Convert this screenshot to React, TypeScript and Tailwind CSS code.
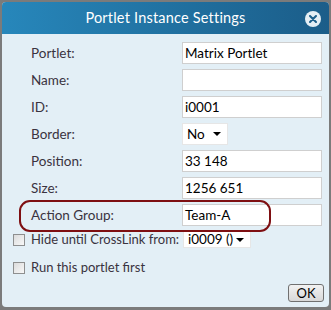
const font = { fontFamily: 'Lato, "Open Sans", sans-serif' };

function Row({ label, children }: { label: string; children: React.ReactNode }) {
  return (
    <div className="flex items-center h-[22px] mb-[5px]">
      <span className="w-[180px] shrink-0 pl-[29px] text-[13.5px] text-[#3a3340]">{label}</span>
      {children}
    </div>
  );
}

function Field({ value }: { value: string }) {
  return (
    <div className="w-[140px] h-[22px] bg-white border border-[#cfcfcf] px-[2px] text-[13.5px] leading-[20px] text-black">
      {value}
    </div>
  );
}

function Select({ value, width, height }: { value: string; width: string; height: string }) {
  return (
    <div className={`${width} ${height} bg-white border border-[#e6e6e6] flex items-center justify-between pl-[4px] pr-[6px] text-[13.5px] text-black`}>
      <span>{value}</span>
      <span className="w-0 h-0 border-l-[4px] border-r-[4px] border-t-[4px] border-l-transparent border-r-transparent border-t-black" />
    </div>
  );
}

function Check() {
  return <span className="w-[12px] h-[12px] border border-[#8e8f8f] bg-gradient-to-br from-[#dcdcdc] to-[#f8f8f8] shrink-0" />;
}

export default function App() {
  return (
    <div className="w-[331px] h-[310px] bg-[#7b7b7b] pt-[2px] pl-[2px] pr-[2px]" style={font}>
      <div className="w-[327px] h-[305px] bg-[#e3eff6] rounded-[4px] overflow-hidden flex flex-col">
        <div className="h-[32px] bg-gradient-to-r from-[#2787bb] to-[#1b5d89] flex items-center justify-center relative">
          <span className="text-white text-[14.5px] tracking-[0.2px]">Portlet Instance Settings</span>
          <span className="absolute right-[8px] top-[9px] w-[16px] h-[16px] rounded-full bg-[#e4eef4] flex items-center justify-center">
            <svg width="8" height="8" viewBox="0 0 8 8">
              <path d="M1 1 L7 7 M7 1 L1 7" stroke="#1d5f8a" strokeWidth="2" strokeLinecap="round" />
            </svg>
          </span>
        </div>
        <div className="pt-[8px]">
          <Row label="Portlet:"><Field value="Matrix Portlet" /></Row>
          <Row label="Name:"><Field value="" /></Row>
          <Row label="ID:"><Field value="i0001" /></Row>
          <Row label="Border:"><Select value="No" width="w-[46px]" height="h-[22px]" /></Row>
          <Row label="Position:"><Field value="33 148" /></Row>
          <Row label="Size:"><Field value="1256 651" /></Row>
          <div className="relative">
            <div className="absolute left-[17px] top-[-4px] w-[252px] h-[32px] border-2 border-[#7e0f12] rounded-[11px]" />
            <Row label="Action Group:"><Field value="Team-A" /></Row>
          </div>
          <div className="flex items-center h-[17px] mt-[3px] pl-[11px]">
            <Check />
            <span className="ml-[6px] w-[152px] shrink-0 text-[13px] text-[#3a3340] whitespace-nowrap">Hide until CrossLink from:</span>
            <Select value="i0009 ()" width="w-[68px]" height="h-[17px]" />
          </div>
          <div className="flex items-center h-[16px] mt-[12px] pl-[11px]">
            <Check />
            <span className="ml-[6px] text-[13px] text-[#3a3340]">Run this portlet first</span>
          </div>
          <div className="flex justify-end pr-[5px] mt-[8px]">
            <button className="w-[36px] h-[18px] rounded-[3px] border border-[#707070] bg-gradient-to-b from-[#f2f2f2] to-[#d8d8d8] text-[13px] leading-[14px] text-black">OK</button>
          </div>
        </div>
      </div>
    </div>
  );
}
